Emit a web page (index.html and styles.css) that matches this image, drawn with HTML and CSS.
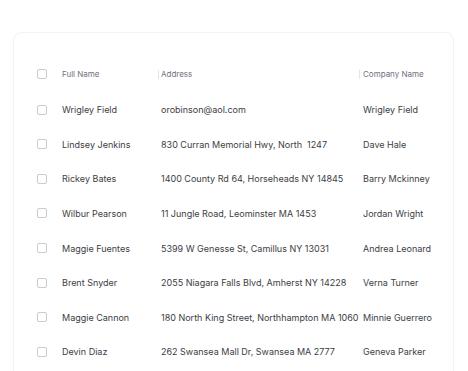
FILE: index.html
```html
<!DOCTYPE html>
<html>
<head>
<meta charset="utf-8">
<link rel="stylesheet" href="styles.css">
</head>
<body>
<div class="card">
  <div class="table">
    <div class="row head">
      <div class="cb"><span class="box"></span></div>
      <div class="c1">Full Name</div>
      <div class="c2"><span class="sep"></span>Address</div>
      <div class="c3"><span class="sep"></span>Company Name</div>
    </div>
    <div class="row"><div class="cb"><span class="box"></span></div><div class="c1">Wrigley Field</div><div class="c2">orobinson@aol.com</div><div class="c3">Wrigley Field</div></div>
    <div class="row"><div class="cb"><span class="box"></span></div><div class="c1">Lindsey Jenkins</div><div class="c2">830 Curran Memorial Hwy, North&nbsp; 1247</div><div class="c3">Dave Hale</div></div>
    <div class="row"><div class="cb"><span class="box"></span></div><div class="c1">Rickey Bates</div><div class="c2">1400 County Rd 64, Horseheads NY 14845</div><div class="c3">Barry Mckinney</div></div>
    <div class="row"><div class="cb"><span class="box"></span></div><div class="c1">Wilbur Pearson</div><div class="c2">11 Jungle Road, Leominster MA 1453</div><div class="c3">Jordan Wright</div></div>
    <div class="row"><div class="cb"><span class="box"></span></div><div class="c1">Maggie Fuentes</div><div class="c2">5399 W Genesse St, Camillus NY 13031</div><div class="c3">Andrea Leonard</div></div>
    <div class="row"><div class="cb"><span class="box"></span></div><div class="c1">Brent Snyder</div><div class="c2">2055 Niagara Falls Blvd, Amherst NY 14228</div><div class="c3">Verna Turner</div></div>
    <div class="row"><div class="cb"><span class="box"></span></div><div class="c1">Maggie Cannon</div><div class="c2">180 North King Street, Northhampton MA 1060</div><div class="c3">Minnie Guerrero</div></div>
    <div class="row"><div class="cb"><span class="box"></span></div><div class="c1">Devin Diaz</div><div class="c2">262 Swansea Mall Dr, Swansea MA 2777</div><div class="c3">Geneva Parker</div></div>
  </div>
</div>
</body>
</html>
```

FILE: styles.css
```css
html, body {
  margin: 0;
  padding: 0;
  background: #ffffff;
  overflow: hidden;
}
body {
  font-family: Inter, "Noto Sans", sans-serif;
  width: 468px;
  height: 371px;
}
.card {
  margin: 32px 0 0 13px;
  width: 441px;
  height: 339px;
  border: 1px solid #f3f3f4;
  border-bottom: none;
  border-radius: 9px 9px 0 0;
  box-shadow: 0 0 3px rgba(0,0,0,0.025);
  box-sizing: border-box;
  background: #fff;
  overflow: hidden;
}
.table {
  padding-top: 23px;
}
.row {
  display: grid;
  grid-template-columns: 48px 96px 201px 1fr;
  align-items: center;
  height: 34.6px;
  font-size: 9px;
  color: #3d3d42;
}
.row.head {
  height: 36.4px;
  font-size: 8px;
  color: #6e7081;
}
.cb {
  display: flex;
  padding-left: 23px;
}
.box {
  width: 10px;
  height: 10px;
  border: 1px solid #c9cbd1;
  border-radius: 2px;
  box-sizing: border-box;
  background: #fff;
}
.c1 {
  white-space: nowrap;
}
.c2, .c3 {
  padding-left: 3px;
  white-space: nowrap;
  display: flex;
  align-items: center;
}
.row .c3 {
  padding-left: 4px;
}
.row.head .c2 {
  padding-left: 0;
}
.row.head .c3 {
  padding-left: 0;
}
.sep {
  display: inline-block;
  width: 1px;
  height: 9px;
  background: #e3e4e8;
  margin-right: 2px;
}
.row.head .c3 .sep {
  margin-right: 3px;
}
```
